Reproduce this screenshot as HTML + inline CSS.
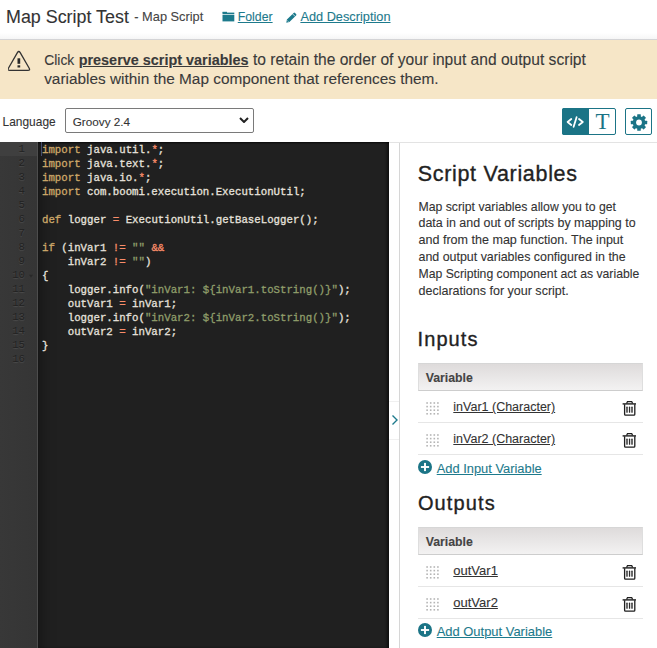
<!DOCTYPE html>
<html><head><meta charset="utf-8">
<style>
*{margin:0;padding:0;box-sizing:border-box}
html,body{width:657px;height:648px;overflow:hidden;background:#fff;font-family:"Liberation Sans",sans-serif;color:#333}
.a{position:absolute;white-space:nowrap}
.t{position:absolute;white-space:nowrap;line-height:0;-webkit-text-stroke:0.1px currentColor}
u{text-decoration:underline;text-underline-offset:0.5px}
#hdrline{position:absolute;left:0;top:39px;width:657px;height:1px;background:#d4d4d6}
#hdrshade{position:absolute;left:0;top:33px;width:657px;height:6px;background:linear-gradient(#fff,#f6f6f6)}
#banner{position:absolute;left:0;top:40px;width:657px;height:59px;background:#f6e6c7}
#code{position:absolute;left:0;top:142px;width:389px;height:506px;background:#202020}
#cshade{position:absolute;left:38px;top:0;width:351px;height:506px;box-shadow:inset -3px 0 3px -1px rgba(0,0,0,.55), inset 0 2px 2px -1px rgba(0,0,0,.6)}
#gutter{position:absolute;left:0;top:0;width:38px;height:506px;background:linear-gradient(to right,#383838,#353535);border-right:1px solid #4d4d4d}
#scroller{position:absolute;left:38px;top:0;width:351px;height:506px;box-shadow:17px 0 16px -16px rgba(0,0,0,0.45) inset}
.ln{position:absolute;right:12px;margin-top:-0.5px;font-family:"Liberation Mono",monospace;font-size:10.72px;line-height:14px;color:#222;text-shadow:0 1px 1px #4d4d4d}
.k{color:#cda869}.o{color:#fa8d6a}.s{color:#8f9d6a}.q{color:#8f9d6a}
#strip{position:absolute;left:389px;top:142px;width:11px;height:506px;background:#fff;border-right:1px solid #d6d6d6}
#toprule{position:absolute;left:389px;top:142px;width:268px;height:1px;background:#e3e3e3}
.thead{position:absolute;left:418px;width:225px;height:28px;background:linear-gradient(#dedbdb,#f3f2f2);border:1px solid #dedede;border-top-color:#d6d6d6;border-bottom-color:#cdcdcd}
.row{position:absolute;left:418px;width:225px;height:32px;border-bottom:1px solid #e6e6e6}
#lines{position:absolute;left:42px;top:1px;-webkit-text-stroke:0.3px currentColor;font-family:"Liberation Mono",monospace;font-size:10.72px;line-height:14px;color:#e6e1dc;white-space:pre}
#lines div{height:14px}
.fold{position:absolute;left:28px;margin-top:-0.5px;font-size:7px;line-height:14px;color:#222;text-shadow:0 1px 1px #4d4d4d}
.actg{position:absolute;left:0;top:0;width:37px;height:14px;background:#3f3f3f}
.actl{position:absolute;left:38px;top:0;width:351px;height:14px;background:rgba(255,255,255,0.031)}
.cursor{position:absolute;left:41px;top:0;width:1px;height:14px;background:#454c6c}
</style></head><body>
<div class="t" id="t0" style="left:6.00px;top:16.90px;font-size:17.89px;color:#333;">Map Script Test</div>
<div class="t" id="t1" style="left:134.30px;top:16.71px;font-size:12.80px;color:#444;">- Map Script</div>
<svg class="a" style="left:222px;top:11px" width="13" height="11" viewBox="0 0 13 11"><g fill="#1d7a8c"><rect x="0.5" y="0.8" width="4.5" height="1.2"/><rect x="0.5" y="1.6" width="11.8" height="1.4"/><rect x="0.5" y="3.7" width="11.8" height="6.7"/></g></svg>
<div class="t" id="t2" style="left:237.75px;top:16.56px;font-size:12.31px;color:#1d7a8c;"><u>Folder</u></div>
<svg class="a" style="left:285.5px;top:11.5px" width="11" height="11" viewBox="0 0 11 11"><path d="M0.3 10.7L0.9 7.6L7.6 0.9Q8.3 0.2 9 0.9L10.1 2Q10.8 2.7 10.1 3.4L3.4 10.1Z" fill="#1d7a8c"/><path d="M6.6 1.9L9.1 4.4" stroke="#fff" stroke-width="0.7"/><path d="M1 8.2L2.8 10" stroke="#fff" stroke-width="0.6" opacity=".7"/></svg>
<div class="t" id="t3" style="left:300.40px;top:16.60px;font-size:12.77px;color:#1d7a8c;"><u>Add Description</u></div>
<div id="hdrshade"></div><div id="hdrline"></div>
<div id="banner"></div>
<svg class="a" style="left:8px;top:50px" width="23" height="22" viewBox="0 0 23 22"><path d="M9.4 2.6Q10.8 0.4 12.2 2.6L21.2 18.3Q22.3 20.3 20 20.3H1.6Q-0.7 20.3 0.4 18.3Z" fill="none" stroke="#333" stroke-width="1.3" stroke-linejoin="round"/><rect x="9.5" y="8.3" width="2.7" height="5.5" fill="#2a2a2a"/><rect x="9.5" y="15.3" width="2.7" height="2.2" fill="#2a2a2a"/></svg>
<div class="t" id="t4" style="left:44.30px;top:60.15px;font-size:13.85px;color:#3a3a3a;">Click</div>
<div class="t" id="t5" style="left:78.70px;top:60.13px;font-size:14.42px;color:#3a3a3a;font-weight:bold;"><u>preserve script variables</u></div>
<div class="t" id="t6" style="left:253.00px;top:60.11px;font-size:15.60px;color:#3a3a3a;">to retain the order of your input and output script</div>
<div class="t" id="t7" style="left:44.20px;top:78.51px;font-size:15.37px;color:#3a3a3a;">variables within the Map component that references them.</div>
<div class="t" id="t8" style="left:2.60px;top:121.59px;font-size:11.93px;color:#333;">Language</div>
<div class="a" style="left:65px;top:108px;width:189px;height:25px;border:1px solid #7a7a7a;border-radius:2px;background:#fff"></div>
<div class="t" id="t9" style="left:72.70px;top:122.04px;font-size:11.74px;color:#333;">Groovy 2.4</div>
<svg class="a" style="left:239px;top:117px" width="10" height="6" viewBox="0 0 10 6"><path d="M1 1L5 5L9 1" fill="none" stroke="#222" stroke-width="2"/></svg>
<div class="a" style="left:562px;top:108px;width:54px;height:27px;border:1px solid #1b7486;border-radius:2px;background:#fff"></div>
<div class="a" style="left:562px;top:108px;width:27px;height:27px;background:#1b7486;border-radius:2px 0 0 2px"></div>
<svg class="a" style="left:566px;top:116px" width="19" height="12" viewBox="0 0 19 12"><g fill="none" stroke="#fff" stroke-width="1.8" stroke-linecap="round" stroke-linejoin="round"><path d="M5.3 3L1.6 6L5.3 9"/><path d="M10.6 1.2L7.6 10.8"/><path d="M13 3L16.8 6L13 9"/></g></svg>
<div class="a" style="left:595.5px;top:109px;font-family:'Liberation Serif',serif;font-size:23px;line-height:25px;color:#1b7486">T</div>
<div class="a" style="left:625px;top:108px;width:27px;height:27px;border:1px solid #1b7486;border-radius:2px;background:#fff"></div>
<svg class="a" style="left:629.5px;top:113.5px" width="18" height="17" viewBox="0 0 18 17"><g fill="#1b7486"><circle cx="9" cy="8.5" r="6.3"/><rect x="7.2" y="0.3" width="3.6" height="16.4" rx="0.5" transform="rotate(0 9 8.5)"/><rect x="7.2" y="0.3" width="3.6" height="16.4" rx="0.5" transform="rotate(45 9 8.5)"/><rect x="7.2" y="0.3" width="3.6" height="16.4" rx="0.5" transform="rotate(90 9 8.5)"/><rect x="7.2" y="0.3" width="3.6" height="16.4" rx="0.5" transform="rotate(135 9 8.5)"/></g><circle cx="9" cy="8.5" r="2.9" fill="#fff"/></svg>
<div id="code"><div id="gutter"><div class="actg"></div><div class="ln" style="top:0.00px">1</div><div class="ln" style="top:14.00px">2</div><div class="ln" style="top:28.00px">3</div><div class="ln" style="top:42.00px">4</div><div class="ln" style="top:56.00px">5</div><div class="ln" style="top:70.00px">6</div><div class="ln" style="top:84.00px">7</div><div class="ln" style="top:98.00px">8</div><div class="ln" style="top:112.00px">9</div><div class="ln" style="top:126.00px">10</div><div class="ln" style="top:140.00px">11</div><div class="ln" style="top:154.00px">12</div><div class="ln" style="top:168.00px">13</div><div class="ln" style="top:182.00px">14</div><div class="ln" style="top:196.00px">15</div><div class="ln" style="top:210.00px">16</div><svg class="a" style="left:28.5px;top:132.00px" width="4" height="4" viewBox="0 0 4 4"><path d="M0 0.8H4L2 3.4Z" fill="#282828"/></svg></div><div id="scroller"></div><div id="cshade"></div><div id="lines"><div><span class="k">import</span> java.util.<span class="o">*</span>;</div><div><span class="k">import</span> java.text.<span class="o">*</span>;</div><div><span class="k">import</span> java.io.<span class="o">*</span>;</div><div><span class="k">import</span> com.boomi.execution.ExecutionUtil;</div><div>&nbsp;</div><div><span class="k">def</span> logger <span class="o">=</span> ExecutionUtil.getBaseLogger();</div><div>&nbsp;</div><div><span class="k">if</span> (inVar1 <span class="o">!=</span> <span class="q">""</span> <span class="o">&amp;&amp;</span></div><div>    inVar2 <span class="o">!=</span> <span class="q">""</span>)</div><div>{</div><div>    logger.info(<span class="q">"</span><span class="s">inVar1: ${inVar1.toString()}</span><span class="q">"</span>);</div><div>    outVar1 <span class="o">=</span> inVar1;</div><div>    logger.info(<span class="q">"</span><span class="s">inVar2: ${inVar2.toString()}</span><span class="q">"</span>);</div><div>    outVar2 <span class="o">=</span> inVar2;</div><div>}</div><div>&nbsp;</div></div><div class="cursor"></div></div>
<div id="strip"></div><div id="toprule"></div><div class="a" style="left:389px;top:401px;width:10px;height:1px;background:#f0f0f0"></div><div class="a" style="left:389px;top:439px;width:10px;height:1px;background:#f0f0f0"></div>
<svg class="a" style="left:391px;top:414px" width="8" height="12" viewBox="0 0 8 12"><path d="M1.5 1.5L6 6L1.5 10.5" fill="none" stroke="#1d7a8c" stroke-width="1.4"/></svg>
<div class="t" id="t10" style="left:417.70px;top:173.50px;font-size:21.50px;color:#222;letter-spacing:0.69px;-webkit-text-stroke:0.35px #222;">Script Variables</div>
<div class="t" id="t11" style="left:418.50px;top:206.52px;font-size:12.26px;color:#333;">Map script variables allow you to get</div>
<div class="t" id="t12" style="left:418.50px;top:223.46px;font-size:12.45px;color:#333;">data in and out of scripts by mapping to</div>
<div class="t" id="t13" style="left:418.50px;top:240.41px;font-size:12.56px;color:#333;">and from the map function. The input</div>
<div class="t" id="t14" style="left:418.50px;top:257.36px;font-size:12.43px;color:#333;">and output variables configured in the</div>
<div class="t" id="t15" style="left:418.50px;top:274.31px;font-size:12.23px;color:#333;">Map Scripting component act as variable</div>
<div class="t" id="t16" style="left:418.50px;top:291.25px;font-size:12.53px;color:#333;">declarations for your script.</div>
<div class="t" id="t17" style="left:417.60px;top:338.81px;font-size:20.00px;color:#222;letter-spacing:1.06px;-webkit-text-stroke:0.35px #222;">Inputs</div>
<div class="thead" style="top:363px"></div>
<div class="t" id="t18" style="left:425.70px;top:377.85px;font-size:12.30px;color:#444;font-weight:bold;">Variable</div>
<div class="row" style="top:391px"></div><div class="row" style="top:423px"></div>
<div class="t" id="t19" style="left:453.30px;top:407.07px;font-size:12.51px;color:#333;"><u>inVar1 (Character)</u></div>
<div class="t" id="t20" style="left:453.30px;top:439.07px;font-size:12.51px;color:#333;"><u>inVar2 (Character)</u></div>
<div class="t" id="t21" style="left:436.70px;top:469.10px;font-size:12.89px;color:#1d7a8c;"><u>Add Input Variable</u></div>
<div class="t" id="t22" style="left:417.90px;top:503.01px;font-size:20.00px;color:#222;letter-spacing:1.15px;-webkit-text-stroke:0.35px #222;">Outputs</div>
<div class="thead" style="top:527px"></div>
<div class="t" id="t23" style="left:425.70px;top:541.66px;font-size:12.30px;color:#444;font-weight:bold;">Variable</div>
<div class="row" style="top:555px"></div><div class="row" style="top:587px"></div>
<div class="t" id="t24" style="left:453.30px;top:570.69px;font-size:13.00px;color:#333;"><u>outVar1</u></div>
<div class="t" id="t25" style="left:453.30px;top:602.99px;font-size:13.00px;color:#333;"><u>outVar2</u></div>
<div class="t" id="t26" style="left:436.70px;top:631.61px;font-size:12.94px;color:#1d7a8c;"><u>Add Output Variable</u></div>
<svg class="a" style="left:622px;top:400px" width="15" height="17" viewBox="0 0 15 17"><g fill="none" stroke="#1e1e1e" stroke-width="1.3"><path d="M4.6 3.6L5.5 1.6H9.7L10.6 3.6"/><path d="M0.6 3.9H14" stroke-width="1.4"/><path d="M2.6 4.2V14.2Q2.6 15.1 3.5 15.1H11.9Q12.8 15.1 12.8 14.2V4.2"/></g><g fill="#2a2a2a"><rect x="4.3" y="6.6" width="1.4" height="6.2" rx=".6"/><rect x="6.9" y="6.6" width="1.3" height="6.2" rx=".6"/><rect x="9.3" y="6.6" width="1.4" height="6.2" rx=".6"/></g></svg>
<svg class="a" style="left:622px;top:432px" width="15" height="17" viewBox="0 0 15 17"><g fill="none" stroke="#1e1e1e" stroke-width="1.3"><path d="M4.6 3.6L5.5 1.6H9.7L10.6 3.6"/><path d="M0.6 3.9H14" stroke-width="1.4"/><path d="M2.6 4.2V14.2Q2.6 15.1 3.5 15.1H11.9Q12.8 15.1 12.8 14.2V4.2"/></g><g fill="#2a2a2a"><rect x="4.3" y="6.6" width="1.4" height="6.2" rx=".6"/><rect x="6.9" y="6.6" width="1.3" height="6.2" rx=".6"/><rect x="9.3" y="6.6" width="1.4" height="6.2" rx=".6"/></g></svg>
<svg class="a" style="left:622px;top:564px" width="15" height="17" viewBox="0 0 15 17"><g fill="none" stroke="#1e1e1e" stroke-width="1.3"><path d="M4.6 3.6L5.5 1.6H9.7L10.6 3.6"/><path d="M0.6 3.9H14" stroke-width="1.4"/><path d="M2.6 4.2V14.2Q2.6 15.1 3.5 15.1H11.9Q12.8 15.1 12.8 14.2V4.2"/></g><g fill="#2a2a2a"><rect x="4.3" y="6.6" width="1.4" height="6.2" rx=".6"/><rect x="6.9" y="6.6" width="1.3" height="6.2" rx=".6"/><rect x="9.3" y="6.6" width="1.4" height="6.2" rx=".6"/></g></svg>
<svg class="a" style="left:622px;top:596px" width="15" height="17" viewBox="0 0 15 17"><g fill="none" stroke="#1e1e1e" stroke-width="1.3"><path d="M4.6 3.6L5.5 1.6H9.7L10.6 3.6"/><path d="M0.6 3.9H14" stroke-width="1.4"/><path d="M2.6 4.2V14.2Q2.6 15.1 3.5 15.1H11.9Q12.8 15.1 12.8 14.2V4.2"/></g><g fill="#2a2a2a"><rect x="4.3" y="6.6" width="1.4" height="6.2" rx=".6"/><rect x="6.9" y="6.6" width="1.3" height="6.2" rx=".6"/><rect x="9.3" y="6.6" width="1.4" height="6.2" rx=".6"/></g></svg>
<svg class="a" style="left:426px;top:402px" width="13" height="13" viewBox="0 0 13 13"><g fill="#b5b5b5"><rect x="0.3" y="0.2" width="1.6" height="1.6"/><rect x="0.3" y="3.8" width="1.6" height="1.6"/><rect x="0.3" y="7.4" width="1.6" height="1.6"/><rect x="0.3" y="11.0" width="1.6" height="1.6"/><rect x="3.9" y="0.2" width="1.6" height="1.6"/><rect x="3.9" y="3.8" width="1.6" height="1.6"/><rect x="3.9" y="7.4" width="1.6" height="1.6"/><rect x="3.9" y="11.0" width="1.6" height="1.6"/><rect x="7.5" y="0.2" width="1.6" height="1.6"/><rect x="7.5" y="3.8" width="1.6" height="1.6"/><rect x="7.5" y="7.4" width="1.6" height="1.6"/><rect x="7.5" y="11.0" width="1.6" height="1.6"/><rect x="11.1" y="0.2" width="1.6" height="1.6"/><rect x="11.1" y="3.8" width="1.6" height="1.6"/><rect x="11.1" y="7.4" width="1.6" height="1.6"/><rect x="11.1" y="11.0" width="1.6" height="1.6"/></g></svg>
<svg class="a" style="left:426px;top:434px" width="13" height="13" viewBox="0 0 13 13"><g fill="#b5b5b5"><rect x="0.3" y="0.2" width="1.6" height="1.6"/><rect x="0.3" y="3.8" width="1.6" height="1.6"/><rect x="0.3" y="7.4" width="1.6" height="1.6"/><rect x="0.3" y="11.0" width="1.6" height="1.6"/><rect x="3.9" y="0.2" width="1.6" height="1.6"/><rect x="3.9" y="3.8" width="1.6" height="1.6"/><rect x="3.9" y="7.4" width="1.6" height="1.6"/><rect x="3.9" y="11.0" width="1.6" height="1.6"/><rect x="7.5" y="0.2" width="1.6" height="1.6"/><rect x="7.5" y="3.8" width="1.6" height="1.6"/><rect x="7.5" y="7.4" width="1.6" height="1.6"/><rect x="7.5" y="11.0" width="1.6" height="1.6"/><rect x="11.1" y="0.2" width="1.6" height="1.6"/><rect x="11.1" y="3.8" width="1.6" height="1.6"/><rect x="11.1" y="7.4" width="1.6" height="1.6"/><rect x="11.1" y="11.0" width="1.6" height="1.6"/></g></svg>
<svg class="a" style="left:426px;top:566px" width="13" height="13" viewBox="0 0 13 13"><g fill="#b5b5b5"><rect x="0.3" y="0.2" width="1.6" height="1.6"/><rect x="0.3" y="3.8" width="1.6" height="1.6"/><rect x="0.3" y="7.4" width="1.6" height="1.6"/><rect x="0.3" y="11.0" width="1.6" height="1.6"/><rect x="3.9" y="0.2" width="1.6" height="1.6"/><rect x="3.9" y="3.8" width="1.6" height="1.6"/><rect x="3.9" y="7.4" width="1.6" height="1.6"/><rect x="3.9" y="11.0" width="1.6" height="1.6"/><rect x="7.5" y="0.2" width="1.6" height="1.6"/><rect x="7.5" y="3.8" width="1.6" height="1.6"/><rect x="7.5" y="7.4" width="1.6" height="1.6"/><rect x="7.5" y="11.0" width="1.6" height="1.6"/><rect x="11.1" y="0.2" width="1.6" height="1.6"/><rect x="11.1" y="3.8" width="1.6" height="1.6"/><rect x="11.1" y="7.4" width="1.6" height="1.6"/><rect x="11.1" y="11.0" width="1.6" height="1.6"/></g></svg>
<svg class="a" style="left:426px;top:598px" width="13" height="13" viewBox="0 0 13 13"><g fill="#b5b5b5"><rect x="0.3" y="0.2" width="1.6" height="1.6"/><rect x="0.3" y="3.8" width="1.6" height="1.6"/><rect x="0.3" y="7.4" width="1.6" height="1.6"/><rect x="0.3" y="11.0" width="1.6" height="1.6"/><rect x="3.9" y="0.2" width="1.6" height="1.6"/><rect x="3.9" y="3.8" width="1.6" height="1.6"/><rect x="3.9" y="7.4" width="1.6" height="1.6"/><rect x="3.9" y="11.0" width="1.6" height="1.6"/><rect x="7.5" y="0.2" width="1.6" height="1.6"/><rect x="7.5" y="3.8" width="1.6" height="1.6"/><rect x="7.5" y="7.4" width="1.6" height="1.6"/><rect x="7.5" y="11.0" width="1.6" height="1.6"/><rect x="11.1" y="0.2" width="1.6" height="1.6"/><rect x="11.1" y="3.8" width="1.6" height="1.6"/><rect x="11.1" y="7.4" width="1.6" height="1.6"/><rect x="11.1" y="11.0" width="1.6" height="1.6"/></g></svg>
<svg class="a" style="left:418px;top:459.7px" width="14" height="14" viewBox="0 0 14 14"><circle cx="7" cy="7" r="7" fill="#1b7486"/><rect x="6.05" y="2.9" width="1.9" height="8.2" fill="#fff"/><rect x="2.9" y="6.05" width="8.2" height="1.9" fill="#fff"/></svg>
<svg class="a" style="left:418px;top:623.4px" width="14" height="14" viewBox="0 0 14 14"><circle cx="7" cy="7" r="7" fill="#1b7486"/><rect x="6.05" y="2.9" width="1.9" height="8.2" fill="#fff"/><rect x="2.9" y="6.05" width="8.2" height="1.9" fill="#fff"/></svg>
</body></html>
